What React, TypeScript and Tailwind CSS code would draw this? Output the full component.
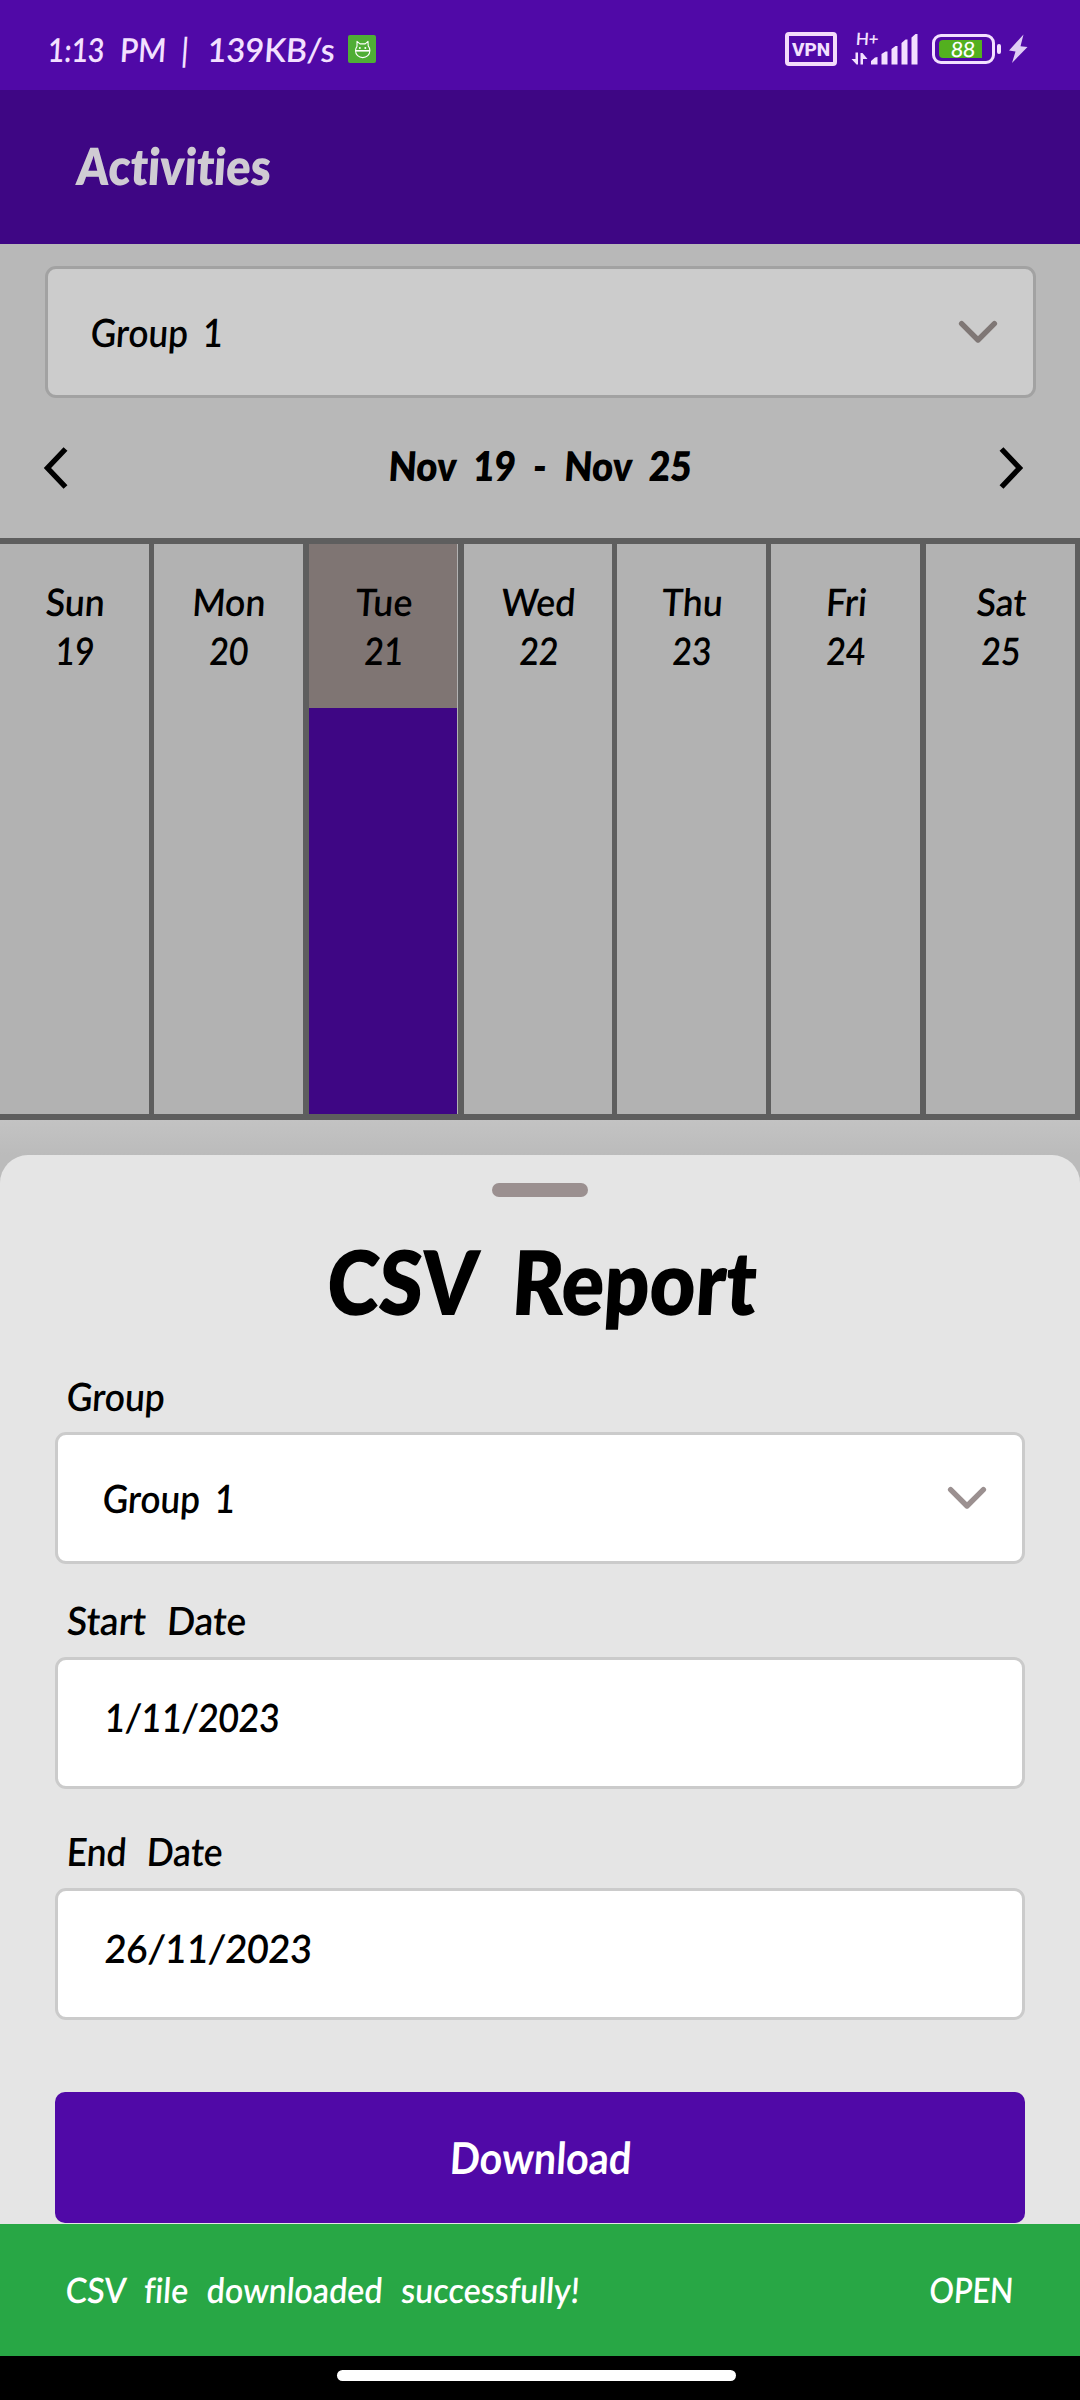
import React from "react";

const ink = "inline-block whitespace-pre -skew-x-4 font-['Lato',sans-serif] [font-variant-ligatures:none]";

const days = [
  { name: "Sun", date: 19, edge: "border-r-[5px]" },
  { name: "Mon", date: 20, edge: "border-r-[6px]" },
  { name: "Tue", date: 21, edge: "border-r-[6px]", today: true },
  { name: "Wed", date: 22, edge: "border-r-[5px]" },
  { name: "Thu", date: 23, edge: "border-r-[5px]" },
  { name: "Fri", date: 24, edge: "border-r-[6px]" },
  { name: "Sat", date: 25, edge: "border-r-[5px]" },
];

function DownChevron({ color }: { color: string }) {
  return (
    <svg width="40" height="26" viewBox="0 0 40 26" fill="none" stroke={color} strokeWidth="5.4" strokeLinecap="round" strokeLinejoin="round">
      <path d="M3.600 4.600 20 21 36.400 4.600" />
    </svg>
  );
}

function CatBadge() {
  return (
    <svg width="28" height="28" viewBox="0 0 28 28" className="ml-[11px]">
      <rect width="28" height="28" rx="2" fill="#4fae35" />
      <g fill="none" stroke="#fff" strokeWidth="1.1" strokeLinejoin="round">
        <path d="M9 11.300V6.400l3 2.500h5.200l2.800-2.500.2 4.400c1.200 1.400 1.700 3 1.700 4.800 0 4.200-3.200 7-7.200 7s-7.200-2.800-7.200-7c0-1.600.5-3 1.500-4.300Z" />
        <path d="M7.500 15.800h14.400" strokeWidth="1.600" />
      </g>
      <circle cx="11.800" cy="13" r="1" fill="#fff" />
      <circle cx="17.300" cy="13" r="1" fill="#fff" />
    </svg>
  );
}

function StatusIcons() {
  return (
    <div className="flex items-center text-[#f3e0ff]">
      <div className="flex h-[34px] w-[52px] items-center justify-center rounded-[4px] border-4 border-[#f3dcfb]">
        <span className="font-['Roboto',sans-serif] text-[19px] leading-none font-extrabold">VPN</span>
      </div>
      <div className="relative ml-[14px] h-[34px] w-[68px]">
        <span className={`${ink} absolute top-[-2px] left-[5px] text-[17px] leading-[18px] font-semibold tracking-[-0.5px]`}>H+</span>
        <svg width="68" height="34" viewBox="0 0 68 34" fill="currentColor">
          <path d="M4.500 20.500v6.500H.5l5 5.500h1.500v-12ZM9.500 21v11.500h2.500v-5.500h4.500l-5-6Z" />
          <path d="M20 32.500v-3.500l4-3.500 2.500-.5v7.500ZM30.500 32.500V22l4-2.500h2v13ZM40.500 32.500V17l4-3h2v18.500ZM50.500 32.500V11l4-3.500h2v25ZM60.500 32.500V5.500l4-3.500h2v30.500Z" />
        </svg>
      </div>
      <div className="ml-[13px] flex h-[30px] w-[63px] items-center rounded-[9px] border-[3px] border-[#f3e0ff] p-1">
        <div className="flex h-[18px] w-[43px] items-center justify-end rounded-l-[4px] bg-[#53b01f] pr-[7px]">
          <span className={`${ink} text-[21px] leading-[18px] font-medium text-white`}>88</span>
        </div>
      </div>
      <div className="ml-[2px] h-[10px] w-1 rounded-[2px] bg-[#f3e0ff]" />
      <svg className="ml-[7px]" width="20" height="30" viewBox="0 0 20 30" fill="#dfcdf5">
        <path d="M15.500.5 1 16.500l6.500 1L4 29 19.500 13l-7-.8Z" />
      </svg>
    </div>
  );
}

const fieldBox = "flex h-[132px] items-center rounded-[11px] border-[3px] border-[#cbcbcb] bg-white";
const fieldLabel = `${ink} origin-left pl-[13px] text-[39px] leading-[48px] font-semibold`;
const fieldValue = `${ink} origin-left scale-x-[0.9] text-[39px] leading-[48px] font-semibold [word-spacing:0.17em]`;
const dateText = `${ink} relative -top-[6px] origin-left text-[39px] leading-[48px] font-semibold`;

export default function App() {
  return (
    <div className="flex h-[2400px] w-[1080px] flex-col overflow-hidden bg-[#bbbbbb] text-black">
      <header>
        <div className="flex h-[90px] items-center justify-between bg-[#5009a7] pt-[8px] pr-[52px] pl-[48px]">
          <div className="flex items-center text-[33px] leading-[40px] text-[#f3e0ff]">
            <div className="flex w-[289px]">
              <span className={`${ink} w-[75px] origin-left scale-x-[0.86] font-semibold`}>1:13</span>
              <span className={`${ink} w-[63px] origin-left scale-x-[0.91] font-semibold`}>PM</span>
              <span className={`${ink} w-[28px] font-medium`}>|</span>
              <span className={`${ink} origin-left scale-x-[0.98] font-semibold`}>139KB/s</span>
            </div>
            <CatBadge />
          </div>
          <StatusIcons />
        </div>
        <div className="flex h-[154px] items-center bg-[#3e0684] pb-[3px] pl-[77px]">
          <h1 className={`${ink} origin-left scale-x-[0.89] text-[51px] leading-[60px] font-extrabold text-[#cfcbd3]`}>Activities</h1>
        </div>
      </header>

      <section className="bg-[#b8b8b8] pt-[22px]">
        <div className="mr-[44px] ml-[45px] flex h-[132px] items-center justify-between rounded-[11px] border-[3px] border-[#a2a2a2] bg-[#cccccc] pr-[35px] pl-[43px]">
          <span className={fieldValue}>Group 1</span>
          <DownChevron color="#7f7775" />
        </div>
        <div className="flex h-[140px] items-center justify-between pr-[56px] pl-[43px]">
          <svg width="26" height="42" viewBox="0 0 26 42" fill="none" stroke="#000" strokeWidth="5.400">
            <path d="M22.500 2 4.500 21l18 19" />
          </svg>
          <h2 className={`${ink} relative -top-[2px] left-[7px] scale-x-[0.89] text-[41px] leading-[50px] font-extrabold [word-spacing:0.25em]`}>Nov 19 - Nov 25</h2>
          <svg width="26" height="42" viewBox="0 0 26 42" fill="none" stroke="#000" strokeWidth="5.400">
            <path d="M3.500 2 21.500 21 3.500 40" />
          </svg>
        </div>
        <div className="grid h-[582px] grid-cols-[154px_155px_155px_153px_154px_155px_154px] border-y-[6px] border-[#5e5e5e] bg-[#b2b2b2]">
          {days.map((day) => (
            <div key={day.name} className={`flex flex-col border-[#5e5e5e] ${day.edge}`}>
              <div className={`flex h-[164px] flex-col items-center pt-[33px] text-[38px] leading-[49px] font-semibold ${day.today ? "mr-px bg-[#7f7573]" : ""}`}>
                <span className={`${ink} relative left-px scale-x-[0.94]`}>{day.name}</span>
                <span className={`${ink} relative left-px scale-x-[0.88]`}>{day.date}</span>
              </div>
              {day.today && <div className="mr-px flex-1 bg-[#3e0684]" />}
            </div>
          ))}
        </div>
        <div className="h-[35px] bg-linear-to-b from-[#c3c3c3] to-[#bbbbbb]" />
      </section>

      <section className="flex h-[1069px] shrink-0 flex-col rounded-t-[28px] bg-[#e5e5e5] px-[55px] pt-[28px]">
        <div className="h-[14px] w-[96px] self-center rounded-full bg-[#9b9090]" />
        <h2 className={`${ink} relative left-[2px] mt-[31px] self-center scale-x-[0.89] text-[89px] leading-[106px] font-extrabold [word-spacing:0.24em]`}>CSV Report</h2>

        <div className="mt-[38px] flex flex-col">
          <label className={`${fieldLabel} scale-x-[0.91]`}>Group</label>
          <div className={`${fieldBox} mt-[12px] justify-between pr-[35px] pl-[45px]`}>
            <span className={fieldValue}>Group 1</span>
            <DownChevron color="#9b9090" />
          </div>
        </div>
        <div className="mt-[32px] flex flex-col">
          <label className={`${fieldLabel} scale-x-[0.95] [word-spacing:0.32em]`}>Start Date</label>
          <div className={`${fieldBox} mt-[13px] pl-[47px]`}>
            <span className={`${dateText} scale-x-[0.9]`}>1/11/2023</span>
          </div>
        </div>
        <div className="mt-[38px] flex flex-col">
          <label className={`${fieldLabel} scale-x-[0.91] [word-spacing:0.32em]`}>End Date</label>
          <div className={`${fieldBox} mt-[13px] pl-[47px]`}>
            <span className={`${dateText} scale-x-[0.955]`}>26/11/2023</span>
          </div>
        </div>
        <button className="mt-[72px] flex h-[131px] items-center justify-center rounded-[10px] bg-[#5009a7] pb-[2px] text-white">
          <span className={`${ink} relative left-px scale-x-[0.9] text-[44px] leading-[54px] font-bold`}>Download</span>
        </button>
      </section>

      <div className="flex h-[132px] shrink-0 items-center justify-between bg-[#28a745] pr-[66px] pb-[2px] pl-[66px] text-[35px] leading-[42px] font-semibold text-white">
        <span className={`${ink} origin-left scale-x-[0.92] [word-spacing:0.33em]`}>CSV file downloaded successfully!</span>
        <span className={`${ink} origin-right scale-x-[0.87]`}>OPEN</span>
      </div>
      <div className="flex h-[44px] shrink-0 bg-black pt-[14px] pl-[337px]">
        <div className="h-[11px] w-[399px] rounded-full bg-white" />
      </div>
    </div>
  );
}
